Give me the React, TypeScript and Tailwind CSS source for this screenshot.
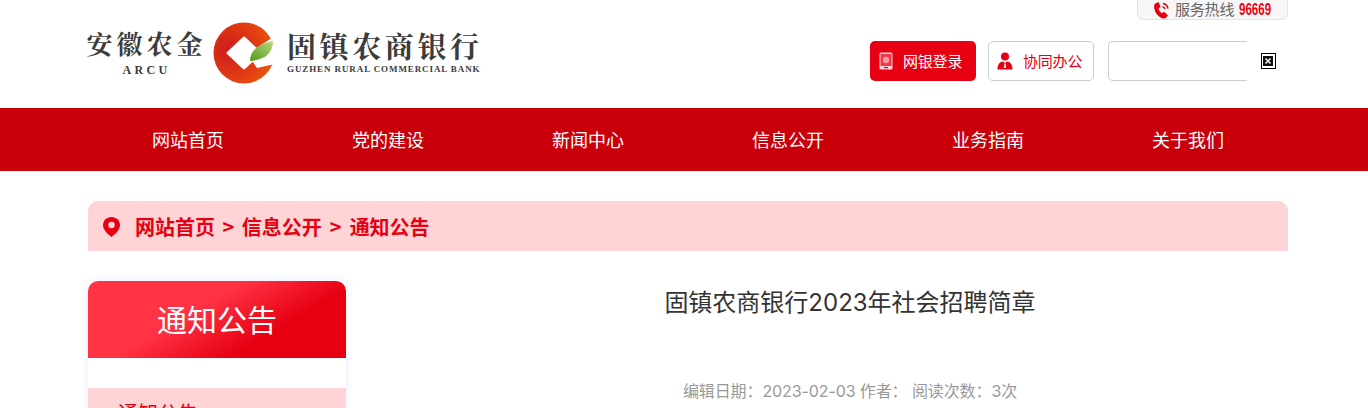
const cjk = "font-['Noto_Sans_CJK_SC','Noto_Sans',sans-serif]";
const latinCjk = "font-['Inter','Noto_Sans_CJK_SC',sans-serif]";
const serif = "font-['Noto_Serif_CJK_SC','Noto_Sans_CJK_SC',serif]";
const navItems = ["网站首页", "党的建设", "新闻中心", "信息公开", "业务指南", "关于我们"];

function LogoMark() {
  return (
    <svg width="62" height="62" viewBox="0 0 62 62" className="shrink-0">
      <defs>
        <radialGradient id="ring" cx="25%" cy="45%" r="80%">
          <stop offset="0%" stopColor="#cf1a1c" />
          <stop offset="55%" stopColor="#df3a14" />
          <stop offset="100%" stopColor="#ea5a0a" />
        </radialGradient>
        <linearGradient id="leaf" x1="0" y1="1" x2="1" y2="0">
          <stop offset="0%" stopColor="#4f9a1e" />
          <stop offset="100%" stopColor="#b9d97a" />
        </linearGradient>
      </defs>
      <circle cx="31" cy="31" r="30.5" fill="url(#ring)" />
      <path d="M62 14 L62 42 L44 46 L34 32 Z" fill="#fff" />
      <path d="M31 16 L47 31 L31 46 L15 31 Z" fill="#fff" strokeLinejoin="round" stroke="#fff" strokeWidth="3" />
      <path d="M37 39 C37 28 46 22 60 19 C60 30 53 38 37 39 Z" fill="url(#leaf)" />
    </svg>
  );
}

function Logo() {
  return (
    <div className="flex items-center text-[#3c3c3c]">
      <div className="w-[117px] flex flex-col items-center">
        <span className={`text-[26px] leading-[30px] font-bold tracking-[4px] whitespace-nowrap -mt-[2px] ${serif}`}>安徽农金</span>
        <span className="mt-[5px] text-[12px] leading-[14px] font-bold tracking-[3.3px] font-['Liberation_Serif',serif]">ARCU</span>
      </div>
      <div className="ml-[8px]">
        <LogoMark />
      </div>
      <div className="ml-[12px] flex flex-col">
        <span className={`text-[29px] leading-[32px] font-bold tracking-[3.6px] whitespace-nowrap -mt-[1px] ${serif}`}>固镇农商银行</span>
        <span className="mt-[1px] text-[9px] leading-[12px] font-bold tracking-[0.9px] font-['Liberation_Serif',serif] whitespace-nowrap">GUZHEN RURAL COMMERCIAL BANK</span>
      </div>
    </div>
  );
}

function PhoneIcon() {
  return (
    <svg width="17" height="18" viewBox="0 0 17 18" fill="none" className="shrink-0">
      <path d="M1.5 3 L5.5 1 L7.6 5.8 L5.6 7.4 C6 9.4 7.2 11 9 12.2 L11.2 10.8 L15 14.6 L12 17.6 C6 17.8 -0.5 10 1.5 3 Z" fill="#e60012" />
      <path d="M9.5 5.8 C10.8 6 11.6 6.9 11.9 8.2 M10 2.6 C12.6 3 14.4 4.8 15 7.6" stroke="#e60012" strokeWidth="1.5" />
    </svg>
  );
}

function BankIcon() {
  return (
    <svg width="14" height="18" viewBox="0 0 14 18">
      <rect x="0.5" y="0.5" width="13" height="17" rx="1.5" fill="#fbd5d7" />
      <rect x="1.5" y="2" width="11" height="12" fill="#ee3a48" />
      <circle cx="7" cy="8" r="3.2" fill="#f59aa0" />
      <rect x="5" y="15" width="4" height="1.2" fill="#e60012" />
    </svg>
  );
}

function UserIcon() {
  return (
    <svg width="16" height="18" viewBox="0 0 16 18">
      <circle cx="8" cy="4.5" r="4" fill="#e60012" />
      <path d="M0.5 17.5 C0.5 12 3 9.8 6 9.5 L8 11 L10 9.5 C13 9.8 15.5 12 15.5 17.5 Z" fill="#e60012" />
      <path d="M7.4 11.5 H8.6 L9 16 H7 Z" fill="#fff" />
    </svg>
  );
}

function PinIcon() {
  return (
    <svg width="17" height="20" viewBox="0 0 17 20" className="shrink-0">
      <path d="M8.5 0 C13.2 0 17 3.6 17 8.2 C17 12.5 12.5 17 8.5 20 C4.5 17 0 12.5 0 8.2 C0 3.6 3.8 0 8.5 0 Z" fill="#e60012" />
      <circle cx="8.5" cy="8" r="3.2" fill="#ffd4d6" />
    </svg>
  );
}

function BrokenImage() {
  return (
    <svg width="15" height="16" viewBox="0 0 15 16" className="ml-[14px] shrink-0">
      <rect x="0" y="0" width="15" height="16" fill="#000" />
      <rect x="1" y="1" width="13" height="14" fill="#fff" />
      <rect x="2" y="3" width="10" height="10" fill="#111" />
      <path d="M4.5 5.5 L9.5 10.5 M9.5 5.5 L4.5 10.5" stroke="#e8e8e8" strokeWidth="1.7" />
    </svg>
  );
}

function Header() {
  return (
    <header className="relative h-[108px]">
      <div className="ml-[88px] w-[1200px] h-full flex items-start justify-between relative">
        <div className="pt-[22px]">
          <Logo />
        </div>
        <div className="pt-[41px] flex items-center">
          <a className="w-[106px] h-[40px] rounded-[5px] bg-[#e60012] flex items-center pl-[9px] text-white text-[15px] tracking-[-0.2px]">
            <BankIcon />
            <span className="ml-[10px]">网银登录</span>
          </a>
          <a className="ml-[12px] w-[106px] h-[40px] rounded-[5px] border border-[#cccccc] flex items-center pl-[8px] text-[#e60012] text-[15px] tracking-[-0.2px]">
            <UserIcon />
            <span className="ml-[10px]">协同办公</span>
          </a>
          <div className="ml-[14px] w-[139px] h-[40px] rounded-l-[5px] border border-r-0 border-[#cccccc]" />
          <BrokenImage />
          <div className="w-[12px]" />
        </div>
        <div className="absolute right-0 top-[-1px] w-[151px] h-[21px] rounded-b-[6px] border border-[#e3e3e3] bg-[#f7f7f7] flex items-center pl-[15px] whitespace-nowrap">
          <PhoneIcon />
          <span className="ml-[5px] shrink-0 text-[15px] text-[#666] tracking-[-0.2px]">服务热线</span>
          <span className="ml-[5px] w-[33px] shrink-0 text-[17px] font-bold text-[#f00012] font-['Liberation_Sans',sans-serif] scale-x-[0.68] origin-left">96669</span>
        </div>
      </div>
    </header>
  );
}

export default function App() {
  return (
    <div className={`h-[408px] overflow-hidden bg-white ${cjk}`}>
      <Header />
      <nav className="h-[63px] bg-[#c9000a]">
        <ul className="ml-[88px] w-[1200px] h-full grid grid-cols-6">
          {navItems.map((item) => (
            <li key={item} className="flex items-center justify-center text-white text-[18px]">
              {item}
            </li>
          ))}
        </ul>
      </nav>
      <div className="ml-[88px] w-[1200px] pt-[30px]">
        <div className="h-[50px] rounded-t-[10px] bg-[#ffd4d6] flex items-center pl-[15px] pt-[1px] text-[#e60012] text-[20px] font-bold">
          <PinIcon />
          <span className="ml-[15px]">网站首页</span>
          <span className="mx-[7.5px]">&gt;</span>
          <span>信息公开</span>
          <span className="mx-[8px]">&gt;</span>
          <span>通知公告</span>
        </div>
        <div className="mt-[30px] flex items-start">
          <aside className="w-[258px] shrink-0 shadow-[0_0_8px_rgba(170,200,255,0.3)]">
            <div className="h-[77px] pb-[3px] rounded-t-[10px] bg-[linear-gradient(150deg,#ff3344_0%,#ff3344_40%,#e60012_70%,#e60012_100%)] flex items-center justify-center text-white text-[30px]">
              通知公告
            </div>
            <div className="h-[30px] bg-white" />
            <div className="h-[50px] bg-[#ffd4d6] pl-[30px] pt-[10px] text-[#e60012] text-[20px] leading-[30px]">
              通知公告
            </div>
          </aside>
          <main className={`flex-1 pl-[66px] ${latinCjk}`}>
            <h1 className="text-center text-[24px] leading-[44px] text-[#333] font-normal">
              固镇农商银行2023年社会招聘简章
            </h1>
            <p className="mt-[54px] text-center text-[16px] leading-[24px] text-[#999] tracking-[-0.1px]">
              编辑日期：2023-02-03 作者： 阅读次数：3次
            </p>
          </main>
        </div>
      </div>
    </div>
  );
}
